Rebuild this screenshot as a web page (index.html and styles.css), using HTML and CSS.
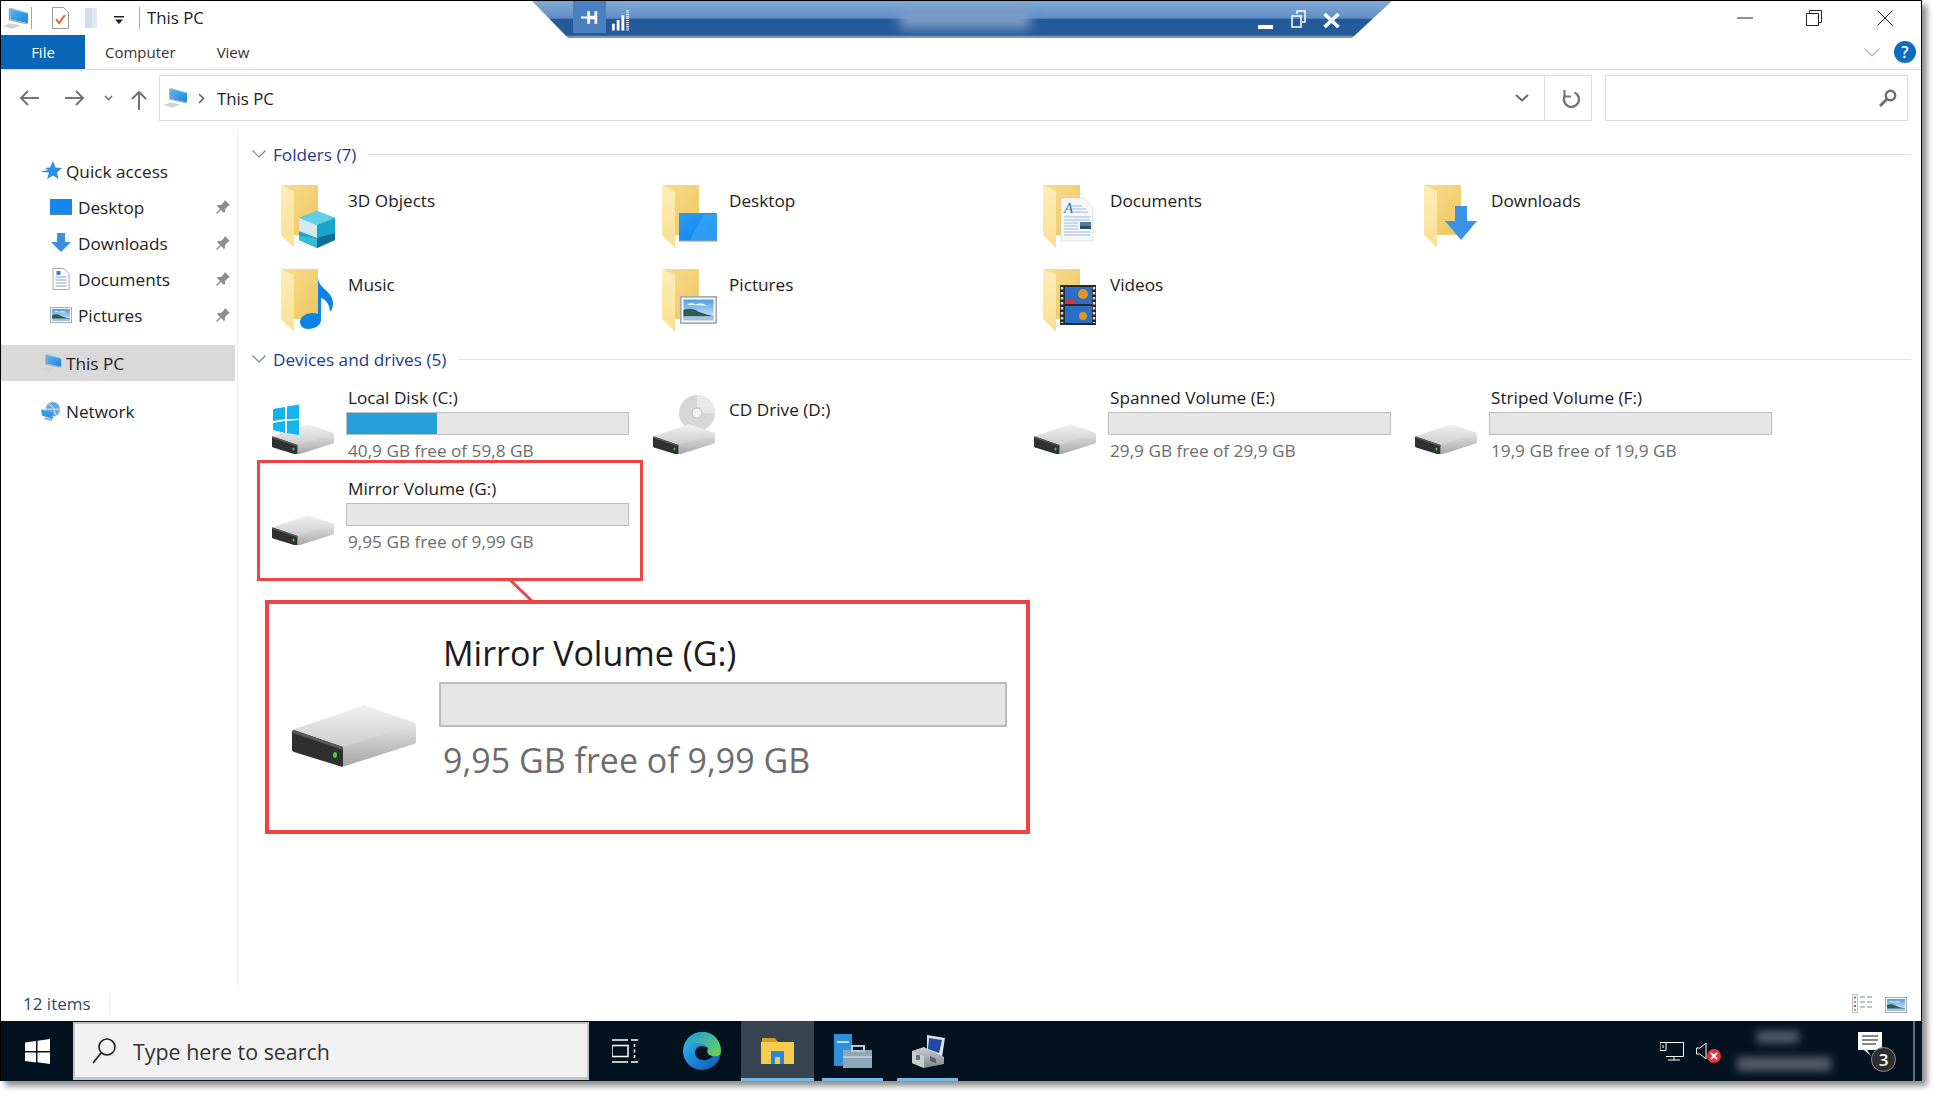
FILE: index.html
```html
<!DOCTYPE html>
<html lang="en">
<head>
<meta charset="utf-8">
<title>This PC</title>
<link rel="stylesheet" href="styles.css">
</head>
<body>
<svg class="defs" aria-hidden="true">
  <defs>
    <linearGradient id="gTop" x1="0" y1="0" x2="0" y2="1"><stop offset="0" stop-color="#efefef"/><stop offset="1" stop-color="#cdcdcd"/></linearGradient>
    <linearGradient id="gSide" x1="0" y1="0" x2="0" y2="1"><stop offset="0" stop-color="#e2e2e2"/><stop offset="1" stop-color="#a6a6a6"/></linearGradient>
    <linearGradient id="gFold" x1="0" y1="0" x2="1" y2="1"><stop offset="0" stop-color="#f8dd8c"/><stop offset="1" stop-color="#eec55f"/></linearGradient>
    <linearGradient id="gFlap" x1="0" y1="0" x2="0" y2="1"><stop offset="0" stop-color="#fdeeb8"/><stop offset="1" stop-color="#fbdf93"/></linearGradient>
    <linearGradient id="gBlue" x1="0" y1="0" x2="1" y2="1"><stop offset="0" stop-color="#2b9cf5"/><stop offset="1" stop-color="#0b84ec"/></linearGradient>
    <linearGradient id="gPicSky" x1="0" y1="0" x2="0" y2="1"><stop offset="0" stop-color="#4f9fe2"/><stop offset="1" stop-color="#e3f1fa"/></linearGradient>
    <linearGradient id="gPcScreen" x1="0" y1="0" x2="1" y2="1"><stop offset="0" stop-color="#58b5f2"/><stop offset="1" stop-color="#1b86dc"/></linearGradient>
    <linearGradient id="gEdge" x1="0" y1="0" x2="1" y2="1"><stop offset="0" stop-color="#35c1f1"/><stop offset=".6" stop-color="#1a7cd0"/><stop offset="1" stop-color="#0c59a4"/></linearGradient>
    <linearGradient id="gEdgeG" x1="0" y1="0" x2="1" y2="1"><stop offset="0" stop-color="#1b9de2"/><stop offset="1" stop-color="#6fd34a"/></linearGradient>
    <linearGradient id="gBox" x1="0" y1="0" x2="0" y2="1"><stop offset="0" stop-color="#c9ced1"/><stop offset="1" stop-color="#7e858a"/></linearGradient>

    <symbol id="drive" viewBox="0 0 124 62">
      <path d="M2 26 72 2l50 17-71 23z" fill="url(#gTop)" stroke="url(#gTop)" stroke-width="3" stroke-linejoin="round"/>
      <path d="M51 42l71-23c1 0 2 1 2 2v16c0 1-1 2-2 2L53 61c-1 .5-2 .5-2 0z" fill="url(#gSide)"/>
      <path d="M2 25l49 17v19c0 1-1 1-2 .5L2 47c-1-.5-2-1-2-2V27c0-1 1-2 2-2z" fill="#303030"/>
      <path d="M1 25l50 17v3L1 28z" fill="#5a5a5a"/>
      <ellipse cx="43" cy="50" rx="2" ry="3" fill="#3bd34f"/>
    </symbol>
    <symbol id="folder" viewBox="0 0 38 63">
      <path d="M0 0h37v50H11z" fill="url(#gFold)"/>
      <path d="M0 0l13 6v57L0 50z" fill="url(#gFlap)"/>
    </symbol>
    <symbol id="pc" viewBox="0 0 28 24">
      <path d="M9 1l18 5v11L9 13z" fill="url(#gPcScreen)"/>
      <path d="M9 1l18 5v1L9 2z" fill="#9ad3f5"/>
      <path d="M7 2l2-1v12l-2 1z" fill="#8fa0ad"/>
      <path d="M7 14l2-1 18 4-2 1z" fill="#a6b0b7"/>
      <path d="M0 20l8-3 11 2-8 4z" fill="#cfd3d6"/>
    </symbol>
    <symbol id="pinned" viewBox="0 0 16 16">
      <path d="M10 1l5 5-2 1-3 3v3l-1 1-3-3-4 4-1-1 4-4-3-3 1-1h3l3-3z" fill="#8a8f93"/>
    </symbol>
    <symbol id="pict" viewBox="0 0 22 16">
      <rect x=".5" y=".5" width="21" height="15" fill="#fff" stroke="#a3adb8"/>
      <rect x="2" y="2" width="18" height="12" fill="url(#gPicSky)"/>
      <path d="M4 5c2-1.500 4-1 5 0 2-1 5-1 7 .5z" fill="#f1f7fc"/>
      <path d="M2 8c3-1 6-1 9 1 3 1 6 2 9 2.500V12H2z" fill="#2e5c50"/>
      <rect x="2" y="11.500" width="18" height="2.500" fill="#a5c3d6"/>
    </symbol>
  </defs>
</svg>

<div class="window">
  <header class="titlebar">
    <svg class="ic-qat-pc"><use href="#pc"/></svg>
    <span class="sep sep-a"></span>
    <svg class="ic-qat-doc" viewBox="0 0 17 22"><path d="M.5.5h11l5 5v16H.5z" fill="#fff" stroke="#9a9a9a"/><path d="M4 12l3 4 6-8" fill="none" stroke="#e0662a" stroke-width="2"/></svg>
    <svg class="ic-qat-fold" viewBox="0 0 14 20"><path d="M0 0h12v20H0z" fill="#dfe8f3"/><path d="M0 0h7v20H0z" fill="#cfdcec"/></svg>
    <svg class="ic-qat-drop" viewBox="0 0 10 8"><path d="M0 0h10v1.500H0zM1 3.500h8L5 8z" fill="#222"/></svg>
    <span class="sep sep-b"></span>
    <span class="title-text">This PC</span>
    <div class="wincontrols">
      <svg class="wc wc-min" viewBox="0 0 16 16"><path d="M0 8h16" stroke="#222" fill="none"/></svg>
      <svg class="wc wc-res" viewBox="0 0 16 16"><path d="M.5 3.500h12v12H.5zM3.500 3.500v-3h12v12h-3" fill="none" stroke="#222"/></svg>
      <svg class="wc wc-close" viewBox="0 0 16 16"><path d="M.5.5l15 15M15.500.5l-15 15" stroke="#222" fill="none"/></svg>
    </div>
  </header>

  <nav class="ribbon">
    <span class="tab tab-file">File</span>
    <span class="tab tab-computer">Computer</span>
    <span class="tab tab-view">View</span>
    <svg class="rib-chev" viewBox="0 0 16 9"><path d="M.5.5L8 8l7.500-7.500" fill="none" stroke="#a9b0b6" stroke-width="1.200"/></svg>
    <span class="help">?</span>
  </nav>

  <div class="addrrow">
    <svg class="nav nav-back" viewBox="0 0 20 16"><path d="M20 8H2M9 1L2 8l7 7" fill="none" stroke="#737373" stroke-width="2"/></svg>
    <svg class="nav nav-fwd" viewBox="0 0 20 16"><path d="M0 8h18M11 1l7 7-7 7" fill="none" stroke="#737373" stroke-width="2"/></svg>
    <svg class="nav nav-small" viewBox="0 0 9 6"><path d="M1 1l3.500 3.500L8 1" fill="none" stroke="#737373" stroke-width="1.600"/></svg>
    <svg class="nav nav-up" viewBox="0 0 16 20"><path d="M8 20V2M1 9l7-7 7 7" fill="none" stroke="#737373" stroke-width="2"/></svg>
    <div class="addrbox">
      <svg class="addr-pc"><use href="#pc"/></svg>
      <svg class="addr-gt" viewBox="0 0 7 11"><path d="M1 1l4.500 4.500L1 10" fill="none" stroke="#666" stroke-width="1.600"/></svg>
      <span class="addr-text">This PC</span>
      <svg class="addr-drop" viewBox="0 0 14 8"><path d="M1 1l6 5.500L13 1" fill="none" stroke="#666" stroke-width="2"/></svg>
      <span class="addr-div"></span>
      <svg class="addr-refresh" viewBox="0 0 18 19"><path d="M12.500 3.500A7.500 7.500 0 1 1 3 6.500" fill="none" stroke="#777" stroke-width="2.400"/><path d="M2.500 1v6.500H9" fill="none" stroke="#777" stroke-width="2.200"/></svg>
    </div>
    <div class="searchbox">
      <svg class="search-glass" viewBox="0 0 18 18"><circle cx="11.500" cy="6.500" r="4.700" fill="none" stroke="#6e6e6e" stroke-width="2.400"/><path d="M8 10l-7 7" stroke="#6e6e6e" stroke-width="2.800"/></svg>
    </div>
  </div>

  <div class="main">
    <aside class="sidebar">
      <div class="side-item lvl0">
        <svg class="side-ic" viewBox="0 0 22 20"><path d="M13 0l2.500 6.500L22 7l-5 4.500L18.500 18 13 14.500 7 18l2-6.500L0 11l8-2-3-2 5-.5z" fill="#2f8fe6"/></svg>
        <span>Quick access</span>
      </div>
      <div class="side-item lvl1">
        <svg class="side-ic" viewBox="0 0 22 16"><rect width="22" height="16" fill="#1487ea"/><rect y="14" width="22" height="2" fill="#5f7c95"/></svg>
        <span>Desktop</span>
        <svg class="pin"><use href="#pinned"/></svg>
      </div>
      <div class="side-item lvl1">
        <svg class="side-ic" viewBox="0 0 22 20"><path d="M7 0h8v9h6l-10 10L1 9h6z" fill="#3a8fe2"/></svg>
        <span>Downloads</span>
        <svg class="pin"><use href="#pinned"/></svg>
      </div>
      <div class="side-item lvl1">
        <svg class="side-ic side-doc" viewBox="0 0 17 22"><path d="M.5.500h11l5 5v16H.5z" fill="#fff" stroke="#a3a9b0"/><path d="M3 9h11M3 12h11M3 15h11M3 18h11" stroke="#7fa0c4"/><rect x="4" y="3" width="4" height="4" fill="#3c82c8"/></svg>
        <span>Documents</span>
        <svg class="pin"><use href="#pinned"/></svg>
      </div>
      <div class="side-item lvl1">
        <svg class="side-ic"><use href="#pict"/></svg>
        <span>Pictures</span>
        <svg class="pin"><use href="#pinned"/></svg>
      </div>
      <div class="side-item lvl0 selected">
        <svg class="side-ic"><use href="#pc"/></svg>
        <span>This PC</span>
      </div>
      <div class="side-item lvl0 net">
        <svg class="side-ic" viewBox="0 0 22 22"><circle cx="13" cy="9" r="8" fill="#6fa8d8"/><path d="M8 3c4 2 7 6 8 12M5 9h16" stroke="#e5f1fb" fill="none"/><path d="M0 9l13 4v7L1 16z" fill="#2f9be8"/><path d="M4 19l8 2" stroke="#9aa6ae" stroke-width="2"/></svg>
        <span>Network</span>
      </div>
    </aside>

    <section class="content">
      <div class="group-head group-folders">
        <svg class="chev" viewBox="0 0 14 8"><path d="M.5.500L7 7l6.500-6.500" fill="none" stroke="#77838f" stroke-width="1.100"/></svg>
        <span class="group-title">Folders (7)</span>
        <span class="group-line"></span>
      </div>
      <div class="tiles folder-tiles">
        <div class="ftile">
          <svg class="ficon" viewBox="0 0 58 64">
            <use href="#folder" width="38" height="63"/>
            <path d="M36 26l18 7v22l-18 8-18-8V33z" fill="#17a5cc"/>
            <path d="M36 26l18 7-18 7-18-7z" fill="#62cfe6"/>
            <path d="M18 33l18 7v13l-18-7z" fill="#d3e9ef"/>
            <path d="M36 53l18-5v7l-18 8z" fill="#0f6f96"/>
            <path d="M36 53v10l-18-8v-4z" fill="#34bdd2"/>
          </svg>
          <span class="ftext">3D Objects</span>
        </div>
        <div class="ftile">
          <svg class="ficon" viewBox="0 0 58 64">
            <use href="#folder" width="38" height="63"/>
            <rect x="17" y="28" width="38" height="28" fill="url(#gBlue)"/>
            <rect x="17" y="55" width="38" height="1.500" fill="#6c9dc4"/>
            <path d="M28 55l14-26h13v26z" fill="#3fa8f7" opacity=".6"/>
          </svg>
          <span class="ftext">Desktop</span>
        </div>
        <div class="ftile">
          <svg class="ficon" viewBox="0 0 58 64">
            <use href="#folder" width="38" height="63"/>
            <path d="M18 13h22l10 9v34H18z" fill="#f5f8fb" stroke="#c9d2da" stroke-width=".600"/>
            <text class="svg-a" x="21" y="28">A</text>
            <path d="M29 21h10M29 24h14M29 27h16M21 32h26M21 35h26M21 38h14M21 41h14M21 44h14M21 47h26M21 50h26" stroke="#9db7d4"/>
            <rect x="37" y="37" width="11" height="7" fill="#4b7fa6"/>
            <rect x="37" y="41" width="11" height="3" fill="#2d4e52"/>
          </svg>
          <span class="ftext">Documents</span>
        </div>
        <div class="ftile">
          <svg class="ficon" viewBox="0 0 58 64">
            <use href="#folder" width="38" height="63"/>
            <path d="M31 21h12v15h10L37 55 21 36h10z" fill="#3a93e4"/>
          </svg>
          <span class="ftext">Downloads</span>
        </div>
        <div class="ftile">
          <svg class="ficon" viewBox="0 0 58 64">
            <use href="#folder" width="38" height="63"/>
            <path d="M37 8c0 12 15 14 15 26 0 4-1 7-3 9 0-8-5-13-9-14v22c0 5-6 9-13 9-5 0-8-3-8-7 0-5 6-9 12-9 2 0 4 .400 6 1z" fill="#0d83e6"/>
          </svg>
          <span class="ftext">Music</span>
        </div>
        <div class="ftile">
          <svg class="ficon" viewBox="0 0 58 64">
            <use href="#folder" width="38" height="63"/>
            <svg x="18" y="27" width="37" height="28" viewBox="0 0 22 16" preserveAspectRatio="none"><use href="#pict" width="22" height="16"/></svg>
          </svg>
          <span class="ftext">Pictures</span>
        </div>
        <div class="ftile">
          <svg class="ficon" viewBox="0 0 58 64">
            <use href="#folder" width="38" height="63"/>
            <rect x="17" y="16" width="36" height="40" fill="#2a2a2a"/>
            <path d="M19 18v36M51 18v36" stroke="#d8d8d8" stroke-width="2.500" stroke-dasharray="2.500 2.500"/>
            <rect x="22" y="18" width="27" height="17" fill="#2a6fc4"/>
            <rect x="22" y="37" width="27" height="17" fill="#2a6fc4"/>
            <circle cx="40" cy="25" r="5" fill="#e09522"/>
            <circle cx="40" cy="47" r="4" fill="#e09522"/>
            <rect x="22" y="30" width="10" height="5" fill="#c93c3c"/>
          </svg>
          <span class="ftext">Videos</span>
        </div>
      </div>

      <div class="group-head group-devices">
        <svg class="chev" viewBox="0 0 14 8"><path d="M.5.500L7 7l6.500-6.500" fill="none" stroke="#77838f" stroke-width="1.100"/></svg>
        <span class="group-title">Devices and drives (5)</span>
        <span class="group-line"></span>
      </div>
      <div class="tiles drive-tiles">
        <div class="dtile">
          <svg class="dicon" viewBox="0 0 62 60">
            <svg y="30" width="62" height="31" viewBox="0 0 124 62"><use href="#drive" width="124" height="62"/></svg>
            <path d="M1 15l12-2v12L1 27zM15 12.500L27 10.500v14l-12 1zM1 29l12-2v12L1 36zM15 27l12-1v15l-12-2z" fill="#12b3ee"/>
          </svg>
          <div class="dinfo">
            <span class="dname">Local Disk (C:)</span>
            <div class="bar"><div class="bar-fill" style="width:32%"></div></div>
            <span class="dfree">40,9 GB free of 59,8 GB</span>
          </div>
        </div>
        <div class="dtile">
          <svg class="dicon" viewBox="0 0 62 60">
            <circle cx="44" cy="19" r="18" fill="#d7d7d7"/>
            <path d="M44 1a18 18 0 0 1 18 18H50a6 6 0 0 0-6-6z" fill="#e9e9e9"/>
            <circle cx="44" cy="19" r="5" fill="#f4f4f4" stroke="#bdbdbd"/>
            <svg y="30" width="62" height="31" viewBox="0 0 124 62"><use href="#drive" width="124" height="62"/></svg>
          </svg>
          <div class="dinfo"><span class="dname dname-single">CD Drive (D:)</span></div>
        </div>
        <div class="dtile">
          <svg class="dicon" viewBox="0 0 62 60"><svg y="30" width="62" height="31" viewBox="0 0 124 62"><use href="#drive" width="124" height="62"/></svg></svg>
          <div class="dinfo">
            <span class="dname">Spanned Volume (E:)</span>
            <div class="bar"></div>
            <span class="dfree">29,9 GB free of 29,9 GB</span>
          </div>
        </div>
        <div class="dtile">
          <svg class="dicon" viewBox="0 0 62 60"><svg y="30" width="62" height="31" viewBox="0 0 124 62"><use href="#drive" width="124" height="62"/></svg></svg>
          <div class="dinfo">
            <span class="dname">Striped Volume (F:)</span>
            <div class="bar"></div>
            <span class="dfree">19,9 GB free of 19,9 GB</span>
          </div>
        </div>
        <div class="dtile">
          <svg class="dicon" viewBox="0 0 62 60"><svg y="30" width="62" height="31" viewBox="0 0 124 62"><use href="#drive" width="124" height="62"/></svg></svg>
          <div class="dinfo">
            <span class="dname">Mirror Volume (G:)</span>
            <div class="bar"></div>
            <span class="dfree">9,95 GB free of 9,99 GB</span>
          </div>
        </div>
      </div>
    </section>
  </div>

  <footer class="statusbar">
    <span class="status-text">12 items</span>
    <span class="status-div"></span>
    <svg class="view-details" viewBox="0 0 21 19">
      <rect x=".5" y=".5" width="5" height="18" fill="#fff" stroke="#b9c2c9"/>
      <rect x="2" y="2.500" width="2" height="2" fill="#5a86b8"/><rect x="2" y="7" width="2" height="2" fill="#a5a15d"/><rect x="2" y="11" width="2" height="2" fill="#b35a4a"/><rect x="2" y="15" width="2" height="2" fill="#8ea3b3"/>
      <path d="M8 3h5M15 3h5M8 8h5M15 8h5M8 13h5M15 13h5" stroke="#80888f"/>
    </svg>
    <svg class="view-thumb"><use href="#pict"/></svg>
  </footer>

  <div class="rdpbar">
    <div class="rdp-pin">
      <svg class="rdp-pin-ic" viewBox="0 0 20 16"><path d="M0 7h7v2H0zM7 1h3v14H7zM10 6h6v4h-6zM15 1h3v14h-3z" fill="#fff"/></svg>
    </div>
    <svg class="rdp-signal" viewBox="0 0 20 22"><path d="M1 15h3v7H1zM6 11h3v11H6zM11 6h3v16h-3z" fill="#fff"/><path d="M17.500 1v21" stroke="#fff" stroke-width="3" stroke-dasharray="1 1"/></svg>
    <div class="rdp-blur"></div>
    <svg class="rdp-btn rdp-min" viewBox="0 0 15 15"><path d="M0 10h15v4H0z" fill="#fff"/></svg>
    <svg class="rdp-btn rdp-res" viewBox="0 0 15 18"><path d="M1 6h9v11H1zM6 4V1h8v11h-3" fill="none" stroke="#fff" stroke-width="1.500"/></svg>
    <svg class="rdp-btn rdp-close" viewBox="0 0 17 15"><path d="M1.500 1l14 13M15.500 1l-14 13" stroke="#fff" stroke-width="3.600"/></svg>
  </div>

  <div class="redbox"></div>
  <svg class="connector" viewBox="0 0 24 21"><path d="M1 0l22 21" stroke="#ee4444" stroke-width="3"/></svg>
  <div class="callout">
    <svg class="callout-icon"><use href="#drive"/></svg>
    <div class="callout-info">
      <span class="callout-name">Mirror Volume (G:)</span>
      <div class="callout-bar"></div>
      <span class="callout-free">9,95 GB free of 9,99 GB</span>
    </div>
  </div>

  <div class="taskbar">
    <div class="start">
      <svg class="start-ic" viewBox="0 0 25 25"><path d="M0 3.500l11-1.500v10H0zM12.500 1.800L25 0v12H12.500zM0 13.500h11v10L0 22zM12.500 13.500H25V25l-12.500-1.800z" fill="#fff"/></svg>
    </div>
    <div class="tb-search">
      <svg class="tb-glass" viewBox="0 0 24 26"><circle cx="15" cy="9" r="8" fill="none" stroke="#222" stroke-width="1.600"/><path d="M9 15L1 25" stroke="#222" stroke-width="1.800"/></svg>
      <span class="tb-search-text">Type here to search</span>
    </div>
    <svg class="tb-taskview" viewBox="0 0 26 24"><path d="M0 1h16M0 23h16M0 6.500h16v11H0zM19 1h7M19 23h7M22.500 5v3M22.500 10.500v3M22.500 16v3" fill="none" stroke="#fff" stroke-width="1.500"/></svg>
    <svg class="tb-edge" viewBox="0 0 38 38">
      <circle cx="19" cy="19" r="19" fill="url(#gEdge)"/>
      <path d="M2 13C6 3 14 0 20 0c10 0 18 8 18 19 0 5-5 6-9 5-6-1-5-5-4-8-3-5-16-8-23-3z" fill="url(#gEdgeG)"/>
      <path d="M12 21c0-6 6-9 13-5-2 4 0 8 5 8-5 6-17 6-18-3z" fill="#041420"/>
    </svg>
    <div class="tb-app tb-explorer active">
      <svg class="tb-app-ic" viewBox="0 0 33 26"><path d="M1 0h13l3 4H1z" fill="#d69a28"/><path d="M0 4h33v22H0z" fill="#f7cb4d"/><path d="M10 13h13v13h-4v-7h-5v7h-4z" fill="#2b86d8"/></svg>
      <span class="tb-under"></span>
    </div>
    <div class="tb-app tb-server">
      <svg class="tb-app-ic" viewBox="0 0 38 34"><rect x="0" y="0" width="18" height="32" fill="#2e8fdc"/><rect x="3" y="7" width="12" height="2" fill="#bfe0f6"/><rect x="9" y="16" width="29" height="18" fill="#8da6b8"/><rect x="18" y="12" width="12" height="5" fill="none" stroke="#b8c7d2" stroke-width="2"/><path d="M9 23h29" stroke="#dfe8ee"/></svg>
      <span class="tb-under"></span>
    </div>
    <div class="tb-app tb-tools">
      <svg class="tb-app-ic" viewBox="0 0 36 33"><path d="M17 0l18 3-3 19-15-5z" fill="#dfe3e6"/><path d="M19 3l13 2-3 13-11-4z" fill="#2049a8"/><path d="M2 16l12-4 20 10v7l-20 4L2 28z" fill="url(#gBox)"/><path d="M2 16l12 5v12L2 28z" fill="#c7cccf"/><path d="M6 20h4v5H6z" fill="#6b7075"/><path d="M20 21l6 3v4l-6-2z" fill="#5f666b"/></svg>
      <span class="tb-under"></span>
    </div>
    <div class="tray">
      <svg class="tray-net" viewBox="0 0 24 19"><path d="M6 .500h17.500v14H6M0 .500h6v8H0zM3 3v3M14 15v3M8 18h12" fill="none" stroke="#fff"/></svg>
      <div class="tray-sound">
        <svg class="tray-spk" viewBox="0 0 11 18"><path d="M.5 6h3.500l6-5v16l-6-5H.5z" fill="none" stroke="#fff"/></svg>
        <svg class="tray-x" viewBox="0 0 14 14"><circle cx="7" cy="7" r="7" fill="#e5323f"/><path d="M4 4l6 6M10 4l-6 6" stroke="#fff" stroke-width="1.800"/></svg>
      </div>
      <div class="tray-clock"><div class="clock-a"></div><div class="clock-b"></div></div>
      <div class="tray-notify">
        <svg class="notify-ic" viewBox="0 0 24 24"><path d="M0 0h24v18H9l4 6-7-6H0z" fill="#fff"/><path d="M4 4h16M4 8h16M4 12h14" stroke="#111"/></svg>
        <span class="notify-badge">3</span>
      </div>
      <span class="tray-line"></span>
    </div>
  </div>
</div>
</body>
</html>
```
FILE: styles.css
```css
* { box-sizing: border-box; }
html, body { margin: 0; padding: 0; background: #fff; }
body { width: 1937px; height: 1097px; overflow: hidden; font-family: "Open Sans", "Liberation Sans", sans-serif; color: #1b1b1b; }
svg { display: block; flex: none; }
.defs { width: 0; height: 0; }

.window { position: relative; width: 1922px; height: 1081px; background: #fff; border-top: 1px solid #000; border-left: 1px solid #000; border-right: 1px solid #111; display: flex; flex-direction: column; box-shadow: 5px 5px 6px rgba(0,0,0,.45); }

.titlebar { height: 34px; display: flex; align-items: center; flex: none; }
.ic-qat-pc { width: 27px; height: 23px; margin-left: 1px; }
.sep { width: 1px; height: 22px; background: #a8a8a8; }
.sep-a { margin-left: 2px; }
.ic-qat-doc { width: 17px; height: 22px; margin-left: 20px; }
.ic-qat-fold { width: 14px; height: 20px; margin-left: 16px; }
.ic-qat-drop { width: 10px; height: 8px; margin-left: 15px; margin-top: 4px; }
.sep-b { margin-left: 15px; }
.title-text { font-size: 16.8px; margin-left: 7px; margin-top: -1px; }
.wincontrols { margin-left: auto; display: flex; align-items: center; padding-right: 28px; }
.wc { width: 16px; height: 16px; }
.wc-res { margin-left: 53px; }
.wc-close { margin-left: 55px; }

.ribbon { height: 35px; flex: none; display: flex; align-items: center; border-bottom: 1px solid #dcdcdc; }
.tab { font-size: 15px; }
.tab-file { width: 84px; height: 34px; background: #0a66b8; color: #fff; display: flex; align-items: center; justify-content: center; }
.tab-computer { margin-left: 20px; color: #333; }
.tab-view { margin-left: 41px; color: #333; }
.rib-chev { width: 16px; height: 9px; margin-left: auto; }
.help { width: 22px; height: 22px; border-radius: 50%; background: #0f6cc0; color: #fff; font-size: 16px; font-weight: 600; display: flex; align-items: center; justify-content: center; margin-left: 14px; margin-right: 5px; }

.addrrow { height: 62px; flex: none; display: flex; align-items: flex-start; padding-top: 5px; }
.nav { margin-top: 15px; }
.nav-back { width: 20px; height: 16px; margin-left: 18px; }
.nav-fwd { width: 20px; height: 16px; margin-left: 26px; }
.nav-small { width: 9px; height: 6px; margin-left: 19px; margin-top: 20px; }
.nav-up { width: 16px; height: 20px; margin-left: 18px; margin-top: 15px; }
.addrbox { width: 1433px; height: 46px; margin-left: 12px; border: 1px solid #dcdcdc; display: flex; align-items: center; }
.addr-pc { width: 25px; height: 22px; margin-left: 3px; }
.addr-gt { width: 7px; height: 11px; margin-left: 10px; }
.addr-text { font-size: 16.8px; margin-left: 12px; }
.addr-drop { width: 14px; height: 8px; margin-left: auto; }
.addr-div { width: 1px; height: 44px; background: #dcdcdc; margin-left: 15px; }
.addr-refresh { width: 18px; height: 19px; margin-left: 17px; margin-right: 11px; }
.searchbox { width: 303px; height: 46px; margin-left: 13px; border: 1px solid #dcdcdc; display: flex; align-items: center; justify-content: flex-end; padding-right: 10px; }
.search-glass { width: 18px; height: 18px; }

.main { flex: 1; min-height: 0; display: flex; }
.sidebar { width: 237px; flex: none; border-right: 1px solid #eeeeee; padding-top: 21px; display: flex; flex-direction: column; }
.side-item { height: 36px; width: 234px; display: flex; align-items: center; font-size: 17.2px; color: #222; flex: none; }
.lvl0 { padding-left: 39px; }
.lvl0 span { margin-left: 4px; }
.lvl1 { padding-left: 49px; }
.lvl1 span { margin-left: 6px; }
.side-ic { width: 22px; height: 20px; }
.side-doc { width: 22px; height: 22px; }
.pin { width: 16px; height: 16px; margin-left: auto; margin-right: 4px; }
.selected { background: #d9d9d9; margin-top: 12px; }
.net { margin-top: 12px; }

.content { flex: 1; min-width: 0; padding: 10px 10px 0 34px; }
.group-head { height: 24px; display: flex; align-items: center; margin-left: -20px; }
.chev { width: 14px; height: 8px; }
.group-title { font-size: 17.2px; color: #1e3a8c; margin-left: 7px; }
.group-line { flex: 1; height: 1px; background: #e2e2e2; margin-left: 12px; }
.tiles { display: grid; grid-template-columns: repeat(4, 381px); }
.folder-tiles { margin-top: 4px; grid-auto-rows: 84px; }
.ftile { display: flex; align-items: flex-start; padding-left: 9px; padding-top: 15px; }
.ficon { width: 58px; height: 64px; }
.ftext { font-size: 17.2px; margin-left: 9px; margin-top: -1px; line-height: 34px; }
.svg-a { font: italic 15px "Liberation Serif", serif; fill: #2f6fb6; }
.group-devices { margin-top: 9px; }
.drive-tiles { margin-top: 14px; grid-auto-rows: 91px; }
.dtile { display: flex; align-items: flex-start; }
.dicon { width: 62px; height: 60px; margin-top: 9px; }
.dinfo { margin-left: 12px; width: 284px; display: flex; flex-direction: column; padding-top: 0; }
.dname { font-size: 17.2px; line-height: 26px; height: 27px; padding-left: 2px; }
.dname-single { margin-top: 12px; }
.bar { width: 283px; height: 23px; background: #e6e6e6; border: 1px solid #bcbcbc; }
.bar-fill { height: 100%; background: #26a0da; }
.dfree { font-size: 17.2px; line-height: 26px; color: #6d6d6d; padding-left: 2px; margin-top: 3px; }

.statusbar { height: 35px; flex: none; display: flex; align-items: center; }
.status-text { font-size: 17px; color: #2c4a66; margin-left: 22px; }
.status-div { width: 1px; height: 20px; background: #eee; margin-left: 18px; }
.view-details { width: 21px; height: 19px; margin-left: auto; }
.view-thumb { width: 22px; height: 16px; margin-left: 12px; margin-top: 2px; margin-right: 14px; }

.rdpbar { position: absolute; left: 531px; top: 0; width: 860px; height: 37px; clip-path: polygon(0 0, 100% 0, 820px 100%, 36px 100%); background: linear-gradient(#85aad8 0, #5d8dc6 47%, #255a99 48%, #255a99 93%, #7b97ae 94%, #7b97ae 100%); display: flex; align-items: flex-start; }
.rdp-pin { width: 33px; height: 32px; margin-left: 41px; background: #4a80c0; display: flex; align-items: center; justify-content: center; }
.rdp-pin-ic { width: 18px; height: 15px; }
.rdp-signal { width: 19px; height: 22px; margin-left: 5px; margin-top: 8px; }
.rdp-blur { width: 130px; height: 20px; margin-left: 270px; margin-top: 8px; background: #7b9cc6; filter: blur(6px); }
.rdp-btn { margin-top: 12px; }
.rdp-min { width: 15px; height: 15px; margin-left: 228px; margin-top: 14px; }
.rdp-res { width: 15px; height: 18px; margin-left: 18px; margin-top: 9px; }
.rdp-close { width: 17px; height: 15px; margin-left: 17px; }

.redbox { position: absolute; left: 256px; top: 459px; width: 386px; height: 121px; border: 3px solid #ee4444; }
.connector { position: absolute; left: 508px; top: 579px; width: 24px; height: 21px; }
.callout { position: absolute; left: 264px; top: 599px; width: 765px; height: 234px; border: 4px solid #ee4444; background: #fff; display: flex; align-items: flex-start; }
.callout-icon { width: 124px; height: 62px; margin-left: 23px; margin-top: 101px; }
.callout-info { margin-left: 23px; width: 568px; display: flex; flex-direction: column; margin-top: 26px; }
.callout-name { font-size: 34px; line-height: 46px; height: 52px; padding-left: 4px; color: #1b1b1b; }
.callout-bar { width: 568px; height: 45px; background: #e6e6e6; border: 2px solid #bcbcbc; }
.callout-free { font-size: 34px; line-height: 46px; color: #6d6d6d; padding-left: 4px; margin-top: 10px; }

.taskbar { height: 60px; flex: none; background: #04121f; display: flex; align-items: center; position: relative; }
.start { width: 72px; height: 60px; display: flex; align-items: center; justify-content: center; }
.start-ic { width: 25px; height: 25px; }
.tb-search { width: 516px; height: 58px; background: #f2f2f2; border: 2px solid #c4c4c4; border-bottom-width: 3px; display: flex; align-items: center; }
.tb-glass { width: 24px; height: 26px; margin-left: 17px; }
.tb-search-text { font-size: 21.4px; color: #333; margin-left: 17px; margin-top: 2px; }
.tb-taskview { width: 26px; height: 24px; margin-left: 23px; }
.tb-edge { width: 38px; height: 38px; margin-left: 45px; }
.tb-app { height: 60px; display: flex; align-items: center; justify-content: center; position: relative; }
.tb-explorer { width: 73px; margin-left: 20px; background: #36454f; }
.tb-server { width: 61px; margin-left: 8px; }
.tb-tools { width: 61px; margin-left: 14px; }
.tb-explorer .tb-app-ic { width: 33px; height: 26px; }
.tb-server .tb-app-ic { width: 38px; height: 34px; }
.tb-tools .tb-app-ic { width: 36px; height: 33px; }
.tb-under { position: absolute; left: 0; right: 0; bottom: 0; height: 3px; background: #76b9ed; }
.tray { margin-left: auto; height: 60px; display: flex; align-items: center; }
.tray-net { width: 24px; height: 19px; }
.tray-sound { position: relative; width: 26px; height: 24px; margin-left: 12px; display: flex; align-items: center; }
.tray-spk { width: 11px; height: 18px; }
.tray-x { position: absolute; left: 11px; top: 10px; width: 14px; height: 14px; }
.tray-clock { width: 96px; height: 60px; margin-left: 14px; display: flex; flex-direction: column; align-items: center; }
.clock-a { width: 42px; height: 12px; margin-top: 10px; background: #56606c; filter: blur(4px); margin-left: -12px; }
.clock-b { width: 94px; height: 14px; margin-top: 14px; background: #56606c; filter: blur(4px); }
.tray-notify { position: relative; width: 40px; height: 46px; margin-left: 26px; }
.notify-ic { width: 24px; height: 24px; margin-top: 4px; }
.notify-badge { position: absolute; left: 13px; top: 19px; width: 25px; height: 25px; border-radius: 50%; background: #2e2e2e; border: 1px solid #8b8b8b; color: #fff; font-size: 17px; font-weight: 600; display: flex; align-items: center; justify-content: center; }
.tray-line { width: 2px; height: 60px; background: #5a6a76; margin-left: 15px; margin-right: 6px; }
```
